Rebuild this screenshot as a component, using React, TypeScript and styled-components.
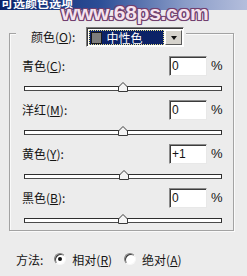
import React from 'react'
import styled, { createGlobalStyle } from 'styled-components'

const GlobalStyle = createGlobalStyle`
  html, body {
    margin: 0;
    padding: 0;
  }
  body {
    background: #ececec;
    font-family: "Noto Sans CJK SC", "Noto Sans", sans-serif;
    font-size: 12px;
    color: #141414;
    overflow: hidden;
  }
`

interface Channel {
  name: string
  key: string
  value: string
}

const channels: Channel[] = [
  { name: '青色', key: 'C', value: '0' },
  { name: '洋红', key: 'M', value: '0' },
  { name: '黄色', key: 'Y', value: '+1' },
  { name: '黑色', key: 'B', value: '0' }
]

export default function App () {
  return (
    <>
      <GlobalStyle />
      <Dialog>
        <TitleBar>
          <TitleText>可选颜色选项</TitleText>
        </TitleBar>
        <Watermark>www.68ps.com</Watermark>

        <Group>
          <Legend>
            <Label>颜色(<U>O</U>):</Label>
            <Select>
              <Selected>
                <Swatch />
                中性色
              </Selected>
              <ArrowButton><Arrow /></ArrowButton>
            </Select>
          </Legend>

          <Rows>
            {channels.map(ch => (
              <Row key={ch.key}>
                <InputRow>
                  <Label>{ch.name}(<U>{ch.key}</U>):</Label>
                  <NumberBox>{ch.value}</NumberBox>
                  <Percent>%</Percent>
                </InputRow>
                <SliderBox>
                  <Track />
                  <Thumb style={{ left: `calc(${50 + parseFloat(ch.value) / 2}% - 5px)` }}>
                    <svg width="10" height="10" viewBox="0 0 10 10">
                      <polygon points="5,0.5 9.5,5 9.5,9.5 0.5,9.5 0.5,5" fill="#f4f4f4" stroke="#3a3a3a" strokeWidth="1" />
                    </svg>
                  </Thumb>
                </SliderBox>
              </Row>
            ))}
          </Rows>
        </Group>

        <MethodRow>
          <MethodLabel>方法:</MethodLabel>
          <Option>
            <Radio checked />
            <span>相对(<U>R</U>)</span>
          </Option>
          <Option>
            <Radio />
            <span>绝对(<U>A</U>)</span>
          </Option>
        </MethodRow>
      </Dialog>
    </>
  )
}

const Dialog = styled.div`
  position: relative;
  width: 247px;
  height: 276px;
  overflow: hidden;
  background: #ececec;
`

const TitleBar = styled.div`
  height: 10px;
  display: flex;
  align-items: flex-end;
  overflow: hidden;
  padding-left: 1px;
  background: linear-gradient(90deg, #0a246a 0%, #2b4d96 40%, #8a9cc8 75%, #b4bedc 100%);
`

const TitleText = styled.span`
  color: #fff;
  font-weight: 700;
  font-size: 12px;
  line-height: 14px;
  white-space: nowrap;
`

const Watermark = styled.div`
  position: absolute;
  left: 61px;
  top: 1px;
  font-family: "Liberation Sans", Arial, sans-serif;
  font-weight: 700;
  font-size: 21px;
  line-height: 24px;
  letter-spacing: -0.3px;
  color: #f5e3ee;
  white-space: nowrap;
  pointer-events: none;
  text-shadow:
    -1px 0 #71406f, 1px 0 #71406f, 0 -1px #71406f, 0 1px #71406f,
    -1px -1px #71406f, 1px -1px #71406f, -1px 1px #71406f, 1px 1px #71406f,
    0 0 2px #8a5a88;
`

const Group = styled.div`
  box-sizing: border-box;
  width: 225px;
  height: 198px;
  margin: 23px 0 0 9px;
  padding: 0 10px 0 12px;
  border: 1px solid #a3a3a3;
  box-shadow: inset 1px 1px 0 #fafafa, 1px 1px 0 #fafafa;
  display: flex;
  flex-direction: column;
`

const Legend = styled.div`
  align-self: flex-start;
  display: flex;
  align-items: center;
  gap: 11px;
  height: 20px;
  margin: -7px 0 0 -6px;
  padding: 0 2px 0 15px;
  background: #ececec;
`

const Label = styled.span`
  flex: 1;
  white-space: nowrap;
  line-height: 16px;
`

const U = styled.span`
  text-decoration: underline;
  text-underline-offset: 1px;
`

const Select = styled.div`
  box-sizing: border-box;
  width: 98px;
  height: 20px;
  display: flex;
  border: 1px solid;
  border-color: #7a7a7a #fdfdfd #fdfdfd #7a7a7a;
  box-shadow: inset 1px 1px 0 #3a3a3a;
  background: #fff;
  padding: 2px 1px 1px 2px;
`

const Selected = styled.div`
  flex: 1;
  display: flex;
  align-items: center;
  gap: 4px;
  padding-left: 2px;
  background: #0c2266;
  outline: 1px dotted #e6df8a;
  outline-offset: -1px;
  color: #fff;
  line-height: 14px;
`

const Swatch = styled.span`
  box-sizing: border-box;
  width: 11px;
  height: 12px;
  background: #7d7d7d;
  border: 1px solid #1a1a1a;
`

const ArrowButton = styled.div`
  box-sizing: border-box;
  width: 17px;
  margin-left: 1px;
  display: flex;
  align-items: center;
  justify-content: center;
  background: #d6d3cc;
  border: 1px solid;
  border-color: #fff #5a5a5a #5a5a5a #fff;
`

const Arrow = styled.span`
  width: 0;
  height: 0;
  border-left: 3.5px solid transparent;
  border-right: 3.5px solid transparent;
  border-top: 4px solid #111;
`

const Rows = styled.div`
  display: flex;
  flex-direction: column;
  margin-top: 9px;
`

const Row = styled.div`
  display: flex;
  flex-direction: column;
  height: 44px;
`

const InputRow = styled.div`
  display: flex;
  align-items: center;
  height: 20px;
`

const NumberBox = styled.div`
  box-sizing: border-box;
  width: 38px;
  height: 20px;
  padding-left: 2px;
  border: 1px solid;
  border-color: #8a8a8a #e8e8e8 #e8e8e8 #8a8a8a;
  box-shadow: inset 1px 1px 0 #3c3c3c;
  background: #fff;
  font-family: "Liberation Sans", Arial, sans-serif;
  font-size: 12px;
  line-height: 18px;
`

const Percent = styled.span`
  width: 12px;
  margin-left: 4px;
  font-family: "Liberation Sans", Arial, sans-serif;
  font-size: 13px;
  line-height: 16px;
`

const SliderBox = styled.div`
  position: relative;
  height: 12px;
  margin: 4px 1px 0 2px;
`

const Track = styled.div`
  box-sizing: border-box;
  height: 5px;
  margin-top: 6px;
  border: 1px solid #2e2e2e;
  border-bottom-color: #4a4a4a;
  background: #fff;
`

const Thumb = styled.div`
  position: absolute;
  top: 2px;
  width: 10px;
  height: 10px;
  line-height: 0;
`

const MethodRow = styled.div`
  display: flex;
  align-items: center;
  height: 16px;
  margin-top: 20px;
  padding-left: 16px;
  white-space: nowrap;
`

const MethodLabel = styled.span`
  margin-right: 11px;
`

const Option = styled.label`
  display: flex;
  align-items: center;
  gap: 6px;
  margin-right: 12px;
`

const Radio = styled.span<{ checked?: boolean }>`
  position: relative;
  box-sizing: border-box;
  width: 12px;
  height: 12px;
  border-radius: 50%;
  border: 1px solid;
  border-color: #808080 #f8f8f8 #f8f8f8 #808080;
  box-shadow: inset 1px 1px 0 #3a3a3a;
  background: #fff;
  &::after {
    content: '';
    display: ${props => (props.checked ? 'block' : 'none')};
    position: absolute;
    left: 3px;
    top: 3px;
    width: 4px;
    height: 4px;
    border-radius: 50%;
    background: #111;
  }
`
